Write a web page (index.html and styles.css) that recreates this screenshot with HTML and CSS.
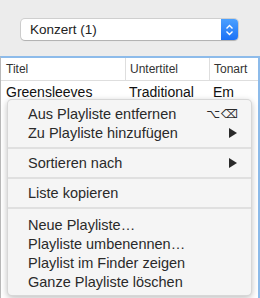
FILE: index.html
```html
<!DOCTYPE html>
<html lang="de">
<head>
    <meta charset="UTF-8">
    <title>Playliste</title>
    <link rel="stylesheet" href="styles.css">
</head>
<body>
    <div class="window">
        <div class="toolbar">
            <div class="popup">
                <span class="popup-label">Konzert (1)</span>
                <span class="popup-btn">
                    <svg width="9" height="12" viewBox="0 0 9 12">
                        <path d="M1.5 4.5 L4.5 1.5 L7.5 4.5 M1.5 7.5 L4.5 10.5 L7.5 7.5" fill="none" stroke="#fff" stroke-width="1.4"/>
                    </svg>
                </span>
            </div>
        </div>

        <div class="table">
            <div class="table-head">
                <div class="col col-title">Titel</div>
                <div class="col col-sub">Untertitel</div>
                <div class="col col-key">Tonart</div>
            </div>
            <div class="table-row">
                <div class="col col-title">Greensleeves</div>
                <div class="col col-sub">Traditional</div>
                <div class="col col-key">Em</div>
            </div>
        </div>

        <!-- context menu over the table -->
        <div class="menu">
            <div class="menu-item">
                <span>Aus Playliste entfernen</span>
                <span class="shortcut">⌥⌫</span>
            </div>
            <div class="menu-item">
                <span>Zu Playliste hinzufügen</span>
                <span class="arrow"></span>
            </div>
            <div class="menu-sep"></div>
            <div class="menu-item">
                <span>Sortieren nach</span>
                <span class="arrow"></span>
            </div>
            <div class="menu-sep"></div>
            <div class="menu-item">
                <span>Liste kopieren</span>
            </div>
            <div class="menu-sep menu-sep-last"></div>
            <div class="menu-item"><span>Neue Playliste…</span></div>
            <div class="menu-item"><span>Playliste umbenennen…</span></div>
            <div class="menu-item"><span>Playlist im Finder zeigen</span></div>
            <div class="menu-item"><span>Ganze Playliste löschen</span></div>
        </div>
    </div>
</body>
</html>
```

FILE: styles.css
```css
html, body {
    margin: 0;
    padding: 0;
}

body {
    font-family: 'Liberation Sans', Arial, sans-serif;
    background-color: #ececec;
    color: #222;
    width: 260px;
    height: 298px;
    overflow: hidden;
}

.window {
    position: relative;
    height: 298px;
    display: flex;
    flex-direction: column;
}

.toolbar {
    height: 56px;
    padding: 19px 22px 0 21px;
    box-sizing: border-box;
}

.popup {
    display: flex;
    height: 21px;
    background-color: #fff;
    border-radius: 4px;
    box-shadow: 0 0 0 1px rgba(0, 0, 0, 0.12), 0 1px 1px rgba(0, 0, 0, 0.15);
    overflow: hidden;
}

.popup-label {
    flex: 1;
    padding-left: 9px;
    font-size: 13.5px;
    line-height: 21px;
    color: #222;
}

.popup-btn {
    width: 17px;
    display: flex;
    align-items: center;
    justify-content: center;
    background: linear-gradient(#4aa0ff, #1b71f6);
}

.table {
    flex: 1;
    background-color: #fff;
    border-top: 2px solid #8dbbea;
    border-right: 2px solid #8dbbea;
    border-left: 1px solid #b8b8b8;
}

.table-head {
    display: flex;
    height: 22px;
    border-bottom: 1px solid #dedede;
    font-size: 12px;
    line-height: 22px;
    color: #333;
}

.table-head .col + .col {
    border-left: 1px solid #dedede;
}

.table-row {
    display: flex;
    height: 20px;
    font-size: 14px;
    line-height: 22px;
    color: #111;
}

.col {
    box-sizing: border-box;
    padding-left: 5px;
    white-space: nowrap;
    overflow: hidden;
}

.col-title {
    width: 124px;
}

.col-sub {
    width: 84px;
}

.table-row .col-sub,
.table-row .col-key,
.table-head .col-sub,
.table-head .col-key {
    padding-left: 4px;
}

.col-key {
    flex: 1;
}

.menu {
    position: absolute;
    left: 7px;
    top: 99px;
    width: 245px;
    height: 197px;
    box-sizing: border-box;
    padding: 4px 0;
    background-color: #f5f5f5;
    border-radius: 5px;
    border: 1px solid rgba(0, 0, 0, 0.12);
    box-shadow: 0 2px 6px rgba(0, 0, 0, 0.25);
}

.menu-item {
    display: flex;
    justify-content: space-between;
    align-items: center;
    height: 19px;
    padding: 0 12px 0 20px;
    font-size: 14.5px;
    color: #2a2a2a;
}

.shortcut {
    font-family: 'DejaVu Sans', sans-serif;
    font-size: 12px;
    color: #2a2a2a;
    letter-spacing: 1px;
}

.arrow {
    width: 0;
    height: 0;
    margin-right: 2px;
    border-top: 5px solid transparent;
    border-bottom: 5px solid transparent;
    border-left: 8px solid #2a2a2a;
}

.menu-sep {
    height: 2px;
    margin: 5px 0 4px;
    background-color: #e0e0e0;
}

.menu-sep-last {
    margin-bottom: 6px;
}
```
